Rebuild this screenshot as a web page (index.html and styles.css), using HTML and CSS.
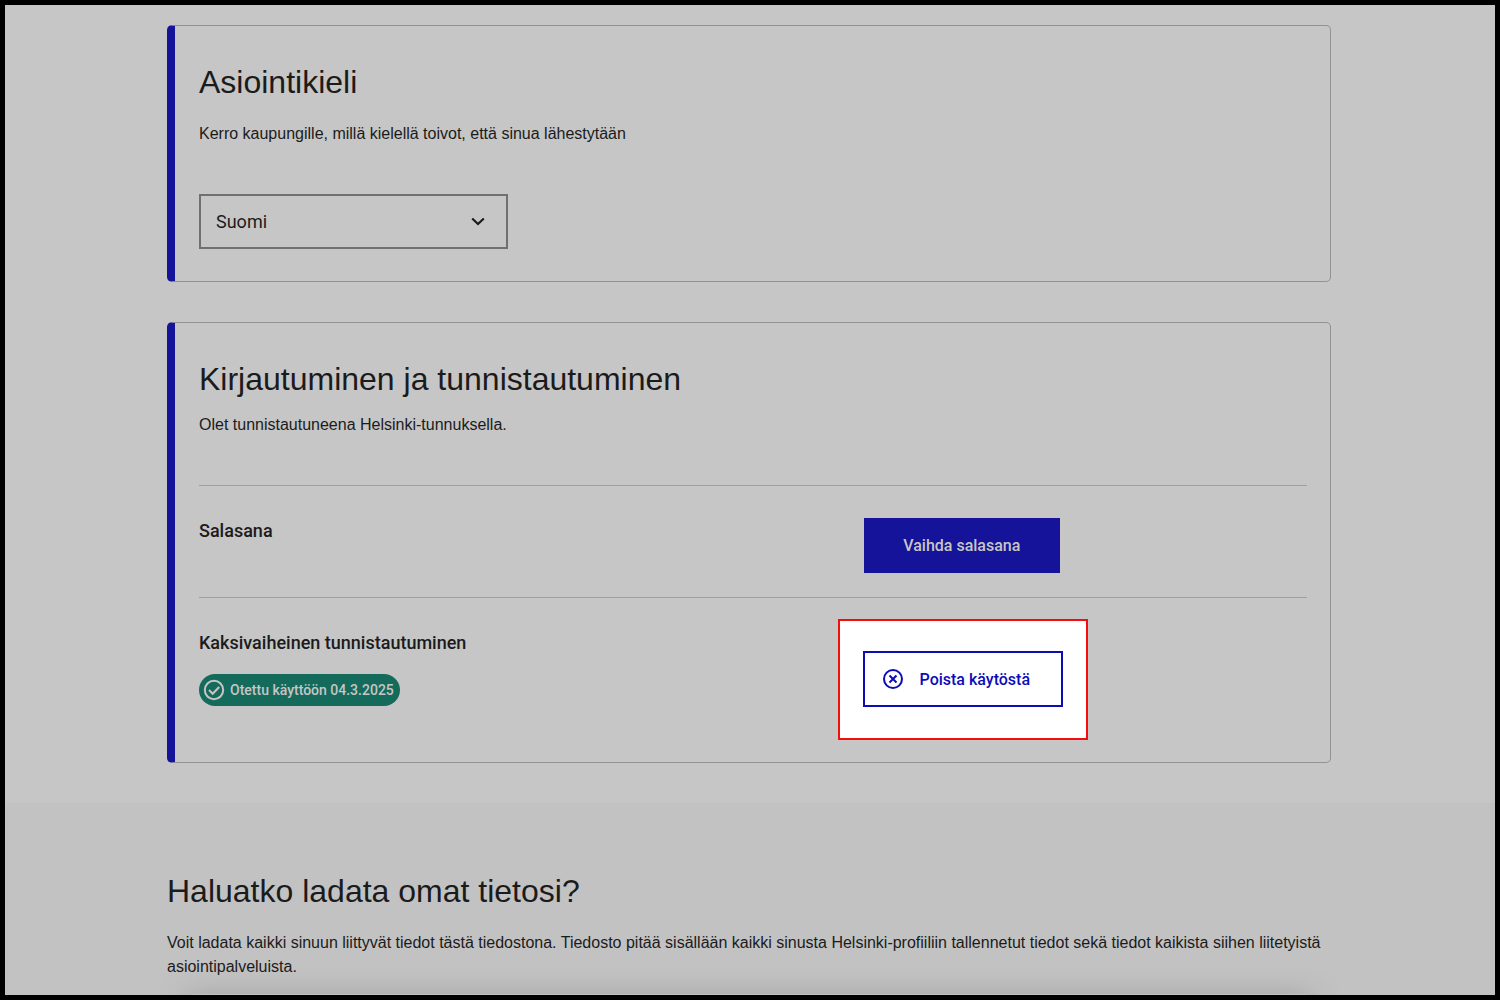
FILE: index.html
```html
<!DOCTYPE html>
<html lang="fi">
<head>
<meta charset="utf-8">
<meta name="viewport" content="width=device-width, initial-scale=1">
<title>Helsinki-profiili</title>
<link rel="stylesheet" href="styles.css">
</head>
<body>
<main class="content">
  <section class="card">
    <h2 class="heading" id="language-heading">Asiointikieli</h2>
    <p class="text card-intro">Kerro kaupungille, millä kielellä toivot, että sinua lähestytään</p>
    <div class="select-box">
      <select class="select" aria-labelledby="language-heading">
        <option selected>Suomi</option>
        <option>Ruotsi</option>
        <option>Englanti</option>
      </select>
      <svg class="chevron" viewBox="0 0 24 24" aria-hidden="true"><path d="M6.2 8.500 12 14l5.800-5.500" fill="none" stroke="currentColor" stroke-width="2.200"/></svg>
    </div>
  </section>

  <section class="card card-login">
    <h2 class="heading">Kirjautuminen ja tunnistautuminen</h2>
    <p class="text login-intro">Olet tunnistautuneena Helsinki-tunnuksella.</p>
    <div class="row">
      <h3 class="subheading">Salasana</h3>
      <div><button class="button primary" type="button">Vaihda salasana</button></div>
    </div>
    <div class="row row-last">
      <div>
        <h3 class="subheading">Kaksivaiheinen tunnistautuminen</h3>
        <span class="badge">
          <svg class="badge-icon" viewBox="0 0 24 24" aria-hidden="true"><g fill="none" stroke="currentColor" stroke-width="2"><circle cx="12" cy="12" r="9.200"/><path d="m7 12 3.700 3.700L17.200 9"/></g></svg>
          Otettu käyttöön 04.3.2025
        </span>
      </div>
      <div class="highlight">
        <button class="button secondary" type="button">
          <svg class="button-icon" viewBox="0 0 24 24" aria-hidden="true"><g fill="none" stroke="currentColor" stroke-width="2"><circle cx="12" cy="12" r="9"/><path d="m8.500 8.500 7 7m0-7-7 7"/></g></svg>
          <span class="button-label">Poista käytöstä</span>
        </button>
      </div>
    </div>
  </section>
</main>

<section class="download">
  <h2 class="heading">Haluatko ladata omat tietosi?</h2>
  <p class="text download-text">Voit ladata kaikki sinuun liittyvät tiedot tästä tiedostona. Tiedosto pitää sisällään kaikki sinusta Helsinki-profiiliin tallennetut tiedot sekä tiedot kaikista siihen liitetyistä asiointipalveluista.</p>
  <div class="bottom-shadow"></div>
</section>
</body>
</html>
```
FILE: styles.css
```css
* {
  box-sizing: border-box;
}

body {
  display: flex;
  flex-direction: column;
  min-height: 100vh;
  margin: 0;
  border: 5px solid #000;
  background: #c6c6c6;
  color: #1b1b1b;
  font-family: "Liberation Sans", Arial, sans-serif;
  font-size: 16px;
  line-height: 24px;
}

h2,
h3,
p {
  margin: 0;
}

.content {
  display: flex;
  flex-direction: column;
  gap: 40px;
  padding: 20px 164px 40px 162px;
}

.card {
  padding: 32px 23px 32px 24px;
  border: 1px solid #929292;
  border-left: 8px solid #141399;
  border-radius: 5px;
}

.card-login {
  padding-bottom: 22px;
}

.heading {
  font-size: 32px;
  font-weight: 400;
  line-height: 48px;
}

.text {
  font-size: 16px;
}

.card-intro {
  margin-top: 16px;
}

.login-intro {
  margin: 10px 0 48px;
}

.select-box {
  display: grid;
  align-items: center;
  width: 309px;
  max-width: 100%;
  margin-top: 48px;
}

.select,
.chevron {
  grid-area: 1 / 1;
}

.select {
  width: 100%;
  height: 55px;
  padding: 0 48px 0 15px;
  border: 2px solid #707070;
  border-radius: 0;
  background: transparent;
  color: inherit;
  font-family: Roboto, sans-serif;
  font-size: 18px;
  appearance: none;
}

.chevron {
  justify-self: end;
  width: 24px;
  height: 24px;
  margin-right: 18px;
  pointer-events: none;
}

.row {
  display: grid;
  grid-template-columns: 3fr 2fr;
  align-items: start;
  padding: 32px 0 24px;
  border-top: 1px solid #a0a0a0;
}

.row-last {
  padding-bottom: 0;
}

.subheading,
.button,
.badge {
  font-family: Roboto, sans-serif;
  font-weight: 500;
}

.subheading {
  font-size: 18px;
  line-height: 26px;
}

.button {
  display: flex;
  align-items: center;
  height: 55px;
  border: 2px solid #141399;
  font-size: 16px;
}

.primary {
  justify-content: center;
  width: 196px;
  background: #141399;
  color: #c6c6c6;
}

.secondary {
  width: 200px;
  height: 56px;
  padding: 0 16px;
  border-color: #0c0cb8;
  background: #fff;
  color: #0c0cb8;
}

.button-icon {
  width: 24px;
  height: 24px;
}

.button-label {
  flex: 1;
  text-align: center;
}

.highlight {
  justify-self: start;
  margin: -11px 0 0 -26px;
  padding: 30px 23px 31px;
  border: 2px solid #f50d0d;
  background: #fff;
}

.badge {
  display: inline-flex;
  align-items: center;
  gap: 4px;
  height: 32px;
  margin-top: 18px;
  padding: 0 6px 0 3px;
  border-radius: 16px;
  background: #156b5b;
  color: #c6c6c6;
  font-size: 14px;
}

.badge-icon {
  width: 24px;
  height: 24px;
}

.download {
  display: flex;
  flex: 1;
  flex-direction: column;
  overflow: hidden;
  padding: 64px 164px 0 162px;
  background: #c2c2c3;
}

.download-text {
  margin-top: 16px;
}

.bottom-shadow {
  height: 1px;
  margin: auto 24px 0;
  box-shadow: 0 10px 28px 4px #777;
}
```
